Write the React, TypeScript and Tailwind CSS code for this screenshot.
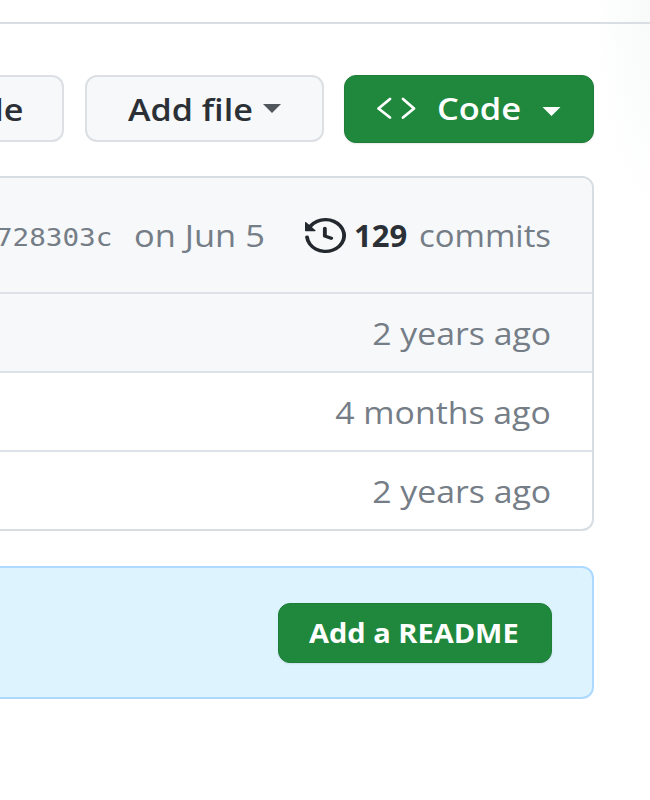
const sans = "font-['Open_Sans','Noto_Sans',sans-serif]";

function HistoryIcon() {
  return (
    <svg viewBox="0 0 16 16" preserveAspectRatio="none" className="mt-px h-[35px] w-[41px] fill-[#24292f]">
      <path d="m.427 1.927 1.215 1.215a8.002 8.002 0 1 1-1.6 5.685.75.75 0 1 1 1.493-.154 6.5 6.5 0 1 0 1.18-4.458l1.358 1.358A.25.25 0 0 1 3.896 6H.25A.25.25 0 0 1 0 5.750V2.104a.25.25 0 0 1 .427-.177ZM7.750 4a.75.75 0 0 1 .75.75v2.992l2.028.812a.75.75 0 0 1-.557 1.392l-2.500-1A.751.751 0 0 1 7 8.250v-3.500A.75.75 0 0 1 7.750 4Z" />
    </svg>
  );
}

function CodeIcon() {
  return (
    <svg viewBox="0 0 40 24" className="-mt-0.5 h-6 w-10 fill-none stroke-white stroke-[2.8]" strokeLinecap="round" strokeLinejoin="round">
      <path d="M14 3 2.500 12.500 14 21.500M27 3 38 12.500 27 21.500" />
    </svg>
  );
}

function Row({ text, className }: { text: string; className: string }) {
  return (
    <div className={`flex items-center justify-end border-t-2 border-[#dce2e8] pr-[41px] ${className}`}>
      <span className="origin-right scale-x-[1.09] text-[31px] leading-[40px]">{text}</span>
    </div>
  );
}

export default function App() {
  return (
    <div className={`relative h-[800px] w-[650px] overflow-hidden whitespace-nowrap bg-white text-[#757d87] ${sans}`}>
      <div className="pointer-events-none absolute top-0 right-0 h-[205px] w-[54px] bg-radial-[100%_100%_at_100%_0%] from-[#f8f9f9] via-[#fbfcfc] to-white" />
      <div className="relative h-6 border-b-2 border-[#d8dee4]" />

      <div className="relative flex pt-[51px] text-[31px] font-semibold text-[#2b3036]">
        <div className="flex h-[67px] w-[64px] shrink-0 items-center justify-end rounded-r-xl border-2 border-l-0 border-[#dcdfe3] bg-[#f6f8fa] pt-0.5 pr-[38px]">
          <span className="origin-right scale-x-[1.1]">le</span>
        </div>
        <div className="ml-[21px] flex h-[67px] w-[239px] shrink-0 items-center rounded-xl border-2 border-[#dcdfe3] bg-[#f6f8fa] pl-[41px]">
          <span className="w-[134px] origin-left scale-x-[1.1] pt-0.5">Add file</span>
          <svg viewBox="0 0 20 10" className="h-[9px] w-5 fill-[#50565c]">
            <path d="M0 0H20L10 10Z" />
          </svg>
        </div>
        <div className="ml-5 flex h-[68px] w-[250px] shrink-0 items-center rounded-xl border border-[#1f7d38] bg-[#1f883d] pl-[31px] text-white shadow-[0_1px_2px_rgba(31,35,40,0.1)]">
          <CodeIcon />
          <span className="-mt-0.5 ml-[21px] w-[105px] origin-left scale-x-[1.11]">Code</span>
          <svg viewBox="0 0 20 10" className="mt-1 h-[9px] w-[19px] fill-white">
            <path d="M0 0H20L10 10Z" />
          </svg>
        </div>
      </div>

      <div className="relative mt-[33px] h-[355px] w-[594px] overflow-hidden rounded-r-xl border-2 border-l-0 border-[#d6dde3]">
        <div className="flex h-[114px] items-center bg-[#f6f8fa] text-[31px]">
          <span className="-ml-1 w-[138px] origin-left scale-x-[1.15] pt-1.5 font-['DejaVu_Sans_Mono',monospace] text-[24px]">728303c</span>
          <span className="w-[171px] origin-left scale-x-[1.11]">on Jun 5</span>
          <HistoryIcon />
          <span className="ml-2 w-[65px] font-bold text-[#2b3036]">129</span>
          <span className="origin-left scale-x-[1.06]">commits</span>
        </div>
        <Row text="2 years ago" className="h-[79px] bg-[#f6f8fa]" />
        <Row text="4 months ago" className="h-[79px]" />
        <Row text="2 years ago" className="h-[79px]" />
      </div>

      <div className="mt-[35px] flex h-[133px] w-[594px] items-center justify-end rounded-r-xl border-2 border-l-0 border-[#add9ff] bg-[#ddf4ff] pr-10">
        <div className="flex h-[60px] w-[274px] items-center rounded-xl border border-[#1f7d38] bg-[#1f883d] pt-0.5 pl-[30px] text-[26px] font-bold text-white shadow-[0_1px_2px_rgba(31,35,40,0.1)]">
          <span className="origin-left scale-x-[1.115]">Add a README</span>
        </div>
      </div>
    </div>
  );
}
